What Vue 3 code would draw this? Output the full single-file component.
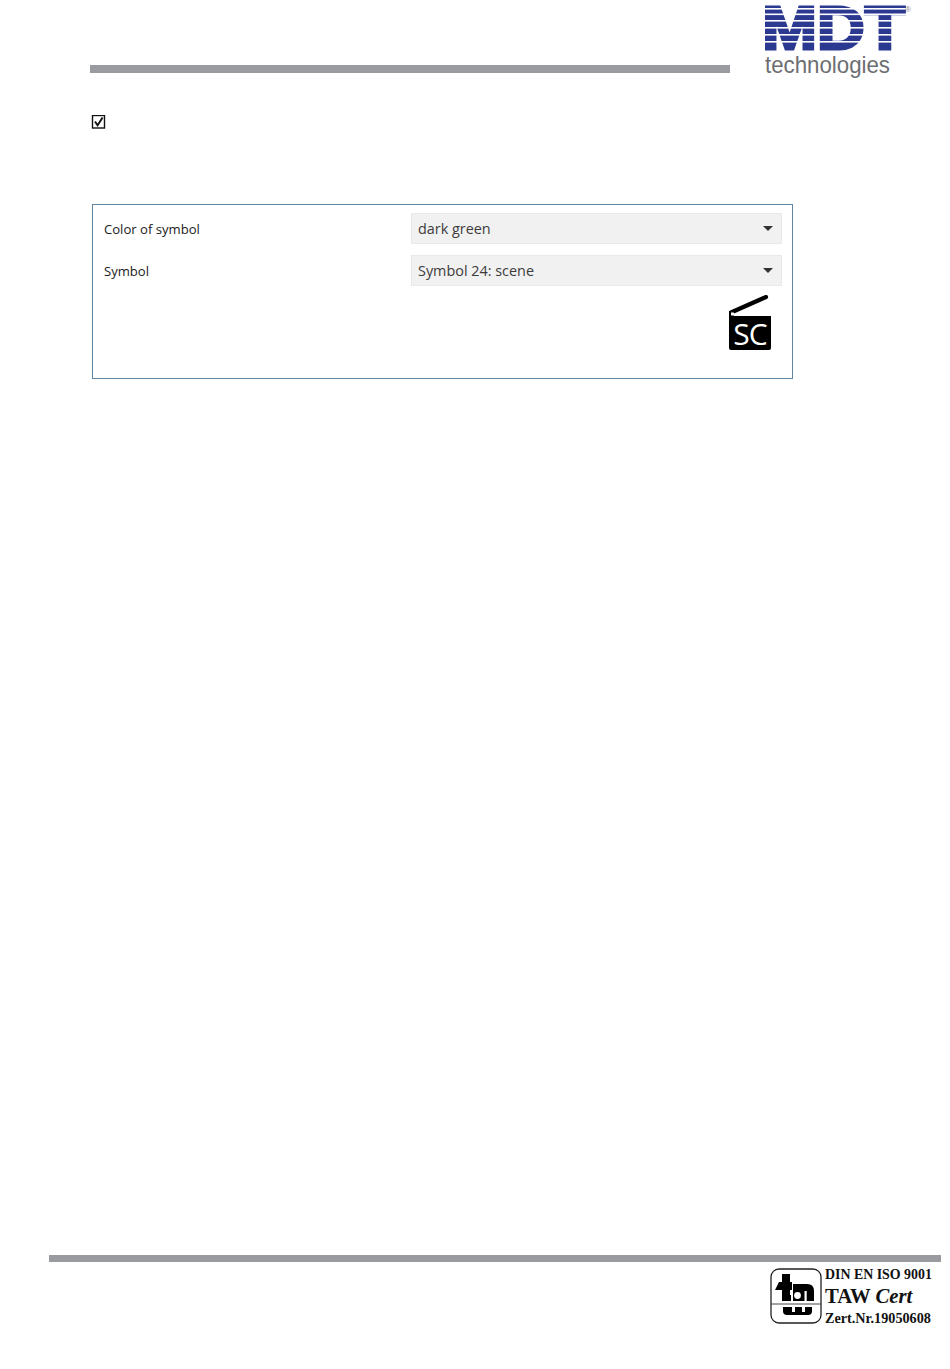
<script setup>
const rows = [
  { label: 'Color of symbol', value: 'dark green' },
  { label: 'Symbol', value: 'Symbol 24: scene' },
]
const stripes = [8, 13.5, 20, 27, 34, 41]
</script>

<template>
  <div class="page">
    <header class="head">
      <div class="head-bar"></div>
      <svg class="mdt" width="150" height="78" viewBox="0 0 150 78">
        <text class="mdt-word" x="-3" y="46" textLength="143" lengthAdjust="spacingAndGlyphs">MDT</text>
        <rect v-for="y in stripes" :key="y" x="0" :y="y - 3" width="142" height="1.6" fill="#fff" />
        <text class="mdt-r" x="140" y="9">®</text>
        <text class="mdt-sub" x="0" y="70" textLength="125" lengthAdjust="spacingAndGlyphs">technologies</text>
      </svg>
    </header>

    <main class="content">
      <svg class="check" width="15" height="15" viewBox="0 0 15 15">
        <rect x="1.5" y="0.5" width="12" height="12.5" fill="#fff" stroke="#111" stroke-width="1.4" />
        <path d="M4 6.5l2.6 3.8L11.6 2.4" fill="none" stroke="#111" stroke-width="1.9" />
      </svg>

      <section class="panel">
        <div v-for="row in rows" :key="row.label" class="row">
          <span class="label">{{ row.label }}</span>
          <div class="select">
            <span>{{ row.value }}</span>
            <i class="caret"></i>
          </div>
        </div>
        <div class="symbol">
          <div class="clap">
            <svg class="stick" width="42" height="22" viewBox="0 0 42 22">
              <path d="M2 17.5L37 2" stroke="#000" stroke-width="4.2" stroke-linecap="round" />
              <rect x="0" y="16" width="5" height="6" fill="#000" />
              <rect x="2" y="17.5" width="3" height="3" fill="#fff" />
            </svg>
            <div class="sc">SC</div>
          </div>
        </div>
      </section>
    </main>

    <footer class="foot">
      <div class="foot-bar"></div>
      <div class="cert">
        <svg class="ta" width="52" height="56" viewBox="0 0 52 56">
          <rect x="1" y="1" width="50" height="54" rx="8" fill="#fff" stroke="#222" stroke-width="1.3" />
          <line x1="1" y1="36" x2="51" y2="36" stroke="#444" stroke-width="1" />
          <g fill="#000">
            <rect x="12" y="6" width="8" height="27" />
            <path d="M5 22l4-8h13v8H5z" />
            <rect x="12" y="27" width="9" height="6" />
            <path d="M23 16h14q7 0 7 7v10H23z" />
            <path d="M13 39h29v4q0 4-4 4H17q-4 0-4-4z" />
          </g>
          <circle cx="27.5" cy="27.5" r="3.4" fill="#fff" />
          <rect x="34.5" y="23" width="2.2" height="10" fill="#fff" />
          <g fill="#fff">
            <rect x="22" y="39" width="3" height="5" />
            <rect x="32" y="39" width="3" height="5" />
          </g>
        </svg>
        <div class="cert-text">
          <div class="c1">DIN EN ISO 9001</div>
          <div class="c2">TAW <em>Cert</em></div>
          <div class="c3">Zert.Nr.19050608</div>
        </div>
      </div>
    </footer>
  </div>
</template>

<style>
html, body { margin: 0; background: #fff; }
</style>

<style scoped>
.page {
  width: 950px;
  height: 1369px;
  display: flex;
  flex-direction: column;
  background: #fff;
  overflow: hidden;
}
.head {
  display: flex;
  align-items: flex-start;
  padding-left: 90px;
  height: 115px;
  flex: none;
}
.head-bar {
  width: 640px;
  height: 8px;
  margin-top: 65px;
  background: #9a9ba0;
}
.mdt { margin-left: 35px; margin-top: 3px; flex: none; }
.mdt-word {
  font-family: "Liberation Sans", sans-serif;
  font-weight: 700;
  font-size: 62px;
  fill: #2b3990;
  stroke: #2b3990;
  stroke-width: 3px;
}
.mdt-r { font-family: "Liberation Sans", sans-serif; font-size: 8px; fill: #888; }
.mdt-sub {
  font-family: "Liberation Sans", sans-serif;
  font-size: 24px;
  fill: #6d6e71;
}
.content { padding-left: 91px; flex: none; }
.check { display: block; }
.panel {
  box-sizing: border-box;
  width: 701px;
  height: 175px;
  margin: 74px 0 0 1px;
  padding: 8px 10px 0 11px;
  border: 1px solid #5f87a3;
}
.row {
  display: flex;
  align-items: center;
  height: 31px;
  margin-bottom: 11px;
}
.label {
  width: 307px;
  font-family: "Open Sans", sans-serif;
  font-size: 13.1px;
  color: #1a1a1a;
}
.select {
  box-sizing: border-box;
  flex: 1;
  height: 31px;
  display: flex;
  align-items: center;
  justify-content: space-between;
  padding: 0 8px 0 6px;
  background: #f1f1f1;
  border: 1px solid #e9e9e9;
  font-family: "Open Sans", sans-serif;
  font-size: 14.4px;
  color: #3c3c3c;
}
.caret {
  width: 0;
  height: 0;
  border-left: 5px solid transparent;
  border-right: 5px solid transparent;
  border-top: 5px solid #333;
}
.symbol { display: flex; justify-content: flex-end; padding-right: 11px; margin-top: -2px; }
.clap { width: 42px; display: flex; flex-direction: column; }
.stick { display: block; }
.sc {
  width: 42px;
  height: 34px;
  margin-top: -1px;
  background: #000;
  border-radius: 0 0 2px 2px;
  color: #fff;
  font-family: "Open Sans", sans-serif;
  font-size: 30px;
  line-height: 36px;
  text-align: center;
  letter-spacing: -1px;
}
.foot { margin-top: auto; padding-left: 49px; padding-bottom: 44px; flex: none; }
.foot-bar { width: 892px; height: 7px; background: #9a9ba0; }
.cert { display: flex; margin: 6px 0 0 721px; }
.ta { display: block; flex: none; }
.cert-text {
  margin-left: 3px;
  font-family: "Liberation Serif", serif;
  font-weight: 700;
  color: #111;
  white-space: nowrap;
}
.c1 { font-size: 13.9px; line-height: 14px; }
.c2 { font-size: 20.7px; line-height: 26px; margin-top: 1px; }
.c3 { font-size: 14.2px; line-height: 14px; margin-top: 2px; }
.c2 em { font-style: italic; }
</style>
